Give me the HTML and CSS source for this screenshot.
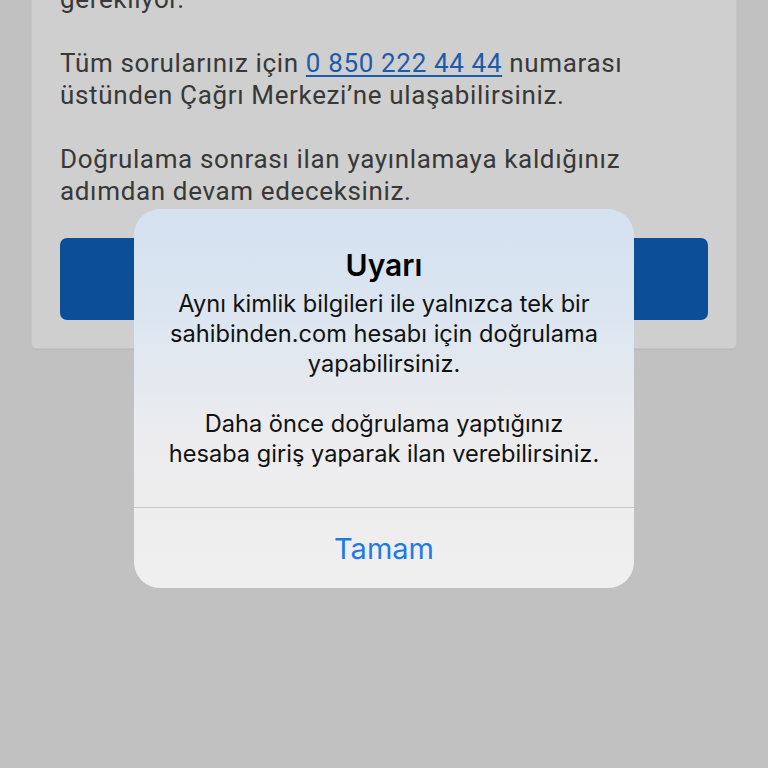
FILE: index.html
```html
<!DOCTYPE html>
<html lang="tr">
<head>
<meta charset="utf-8">
<title>Uyarı</title>
<link rel="stylesheet" href="styles.css">
</head>
<body>
<main class="page">
  <section class="card">
    <p class="para">gerekliyor.</p>
    <p class="para">Tüm sorularınız için <a class="link" href="#">0 850 222 44 44</a> numarası üstünden Çağrı Merkezi’ne ulaşabilirsiniz.</p>
    <p class="para">Doğrulama sonrası ilan yayınlamaya kaldığınız adımdan devam edeceksiniz.</p>
    <div class="cta"></div>
  </section>
</main>
<div class="alert" role="alertdialog">
  <div class="alert-body">
    <h2 class="alert-title">Uyarı</h2>
    <p class="alert-msg">Aynı kimlik bilgileri ile yalnızca tek bir sahibinden.com hesabı için doğrulama yapabilirsiniz.</p>
    <p class="alert-msg">Daha önce doğrulama yaptığınız<br>hesaba giriş yaparak ilan verebilirsiniz.</p>
  </div>
  <button class="alert-btn">Tamam</button>
</div>
</body>
</html>
```
FILE: styles.css
```css
html, body {
  margin: 0;
  padding: 0;
  background: #c1c1c1;
  height: 768px;
  overflow: hidden;
}
.page {
  padding: 0 31px;
}
.card {
  margin-top: -17px;
  background: #cfcfcf;
  border: 1px solid #c4c4c4;
  border-top: none;
  border-radius: 0 0 5px 5px;
  padding: 0 28px 28px 28px;
  box-shadow: 0 1px 1px rgba(0,0,0,0.04);
}
.para {
  margin: 0 0 32px 0;
  font-family: Roboto, "Liberation Sans", sans-serif;
  font-size: 26px;
  letter-spacing: 0.65px;
  line-height: 32px;
  color: #383838;
  width: 600px;
}
.para:last-of-type {
  margin-bottom: 31px;
}
.link {
  color: #1d5aa8;
  text-decoration: underline;
  text-underline-offset: 3px;
  text-decoration-thickness: 2px;
}
.cta {
  height: 82px;
  background: #0d4f97;
  border-radius: 7px;
}
.alert {
  position: absolute;
  left: 134px;
  top: 209px;
  width: 500px;
  height: 379px;
  border-radius: 26px;
  background: linear-gradient(180deg, #d3e1f1 0%, #dde6f0 30%, #ececee 60%, #efefef 100%);
  display: flex;
  flex-direction: column;
  overflow: hidden;
  font-family: Inter, "Open Sans", sans-serif;
}
.alert-body {
  padding: 38px 24px 38px;
  text-align: center;
  border-bottom: 1.5px solid #c9c9c9;
}
.alert-title {
  margin: 0 0 6px 0;
  font-size: 30px;
  line-height: 36px;
  font-weight: 600;
  color: #000;
}
.alert-msg {
  margin: 0;
  font-size: 23.6px;
  line-height: 30px;
  color: #111;
}
.alert-msg + .alert-msg {
  margin-top: 30px;
}
.alert-btn {
  flex: 1;
  border: none;
  background: transparent;
  font-family: Inter, "Open Sans", sans-serif;
  font-size: 29px;
  color: #1f7ae6;
  padding: 0;
}
```
